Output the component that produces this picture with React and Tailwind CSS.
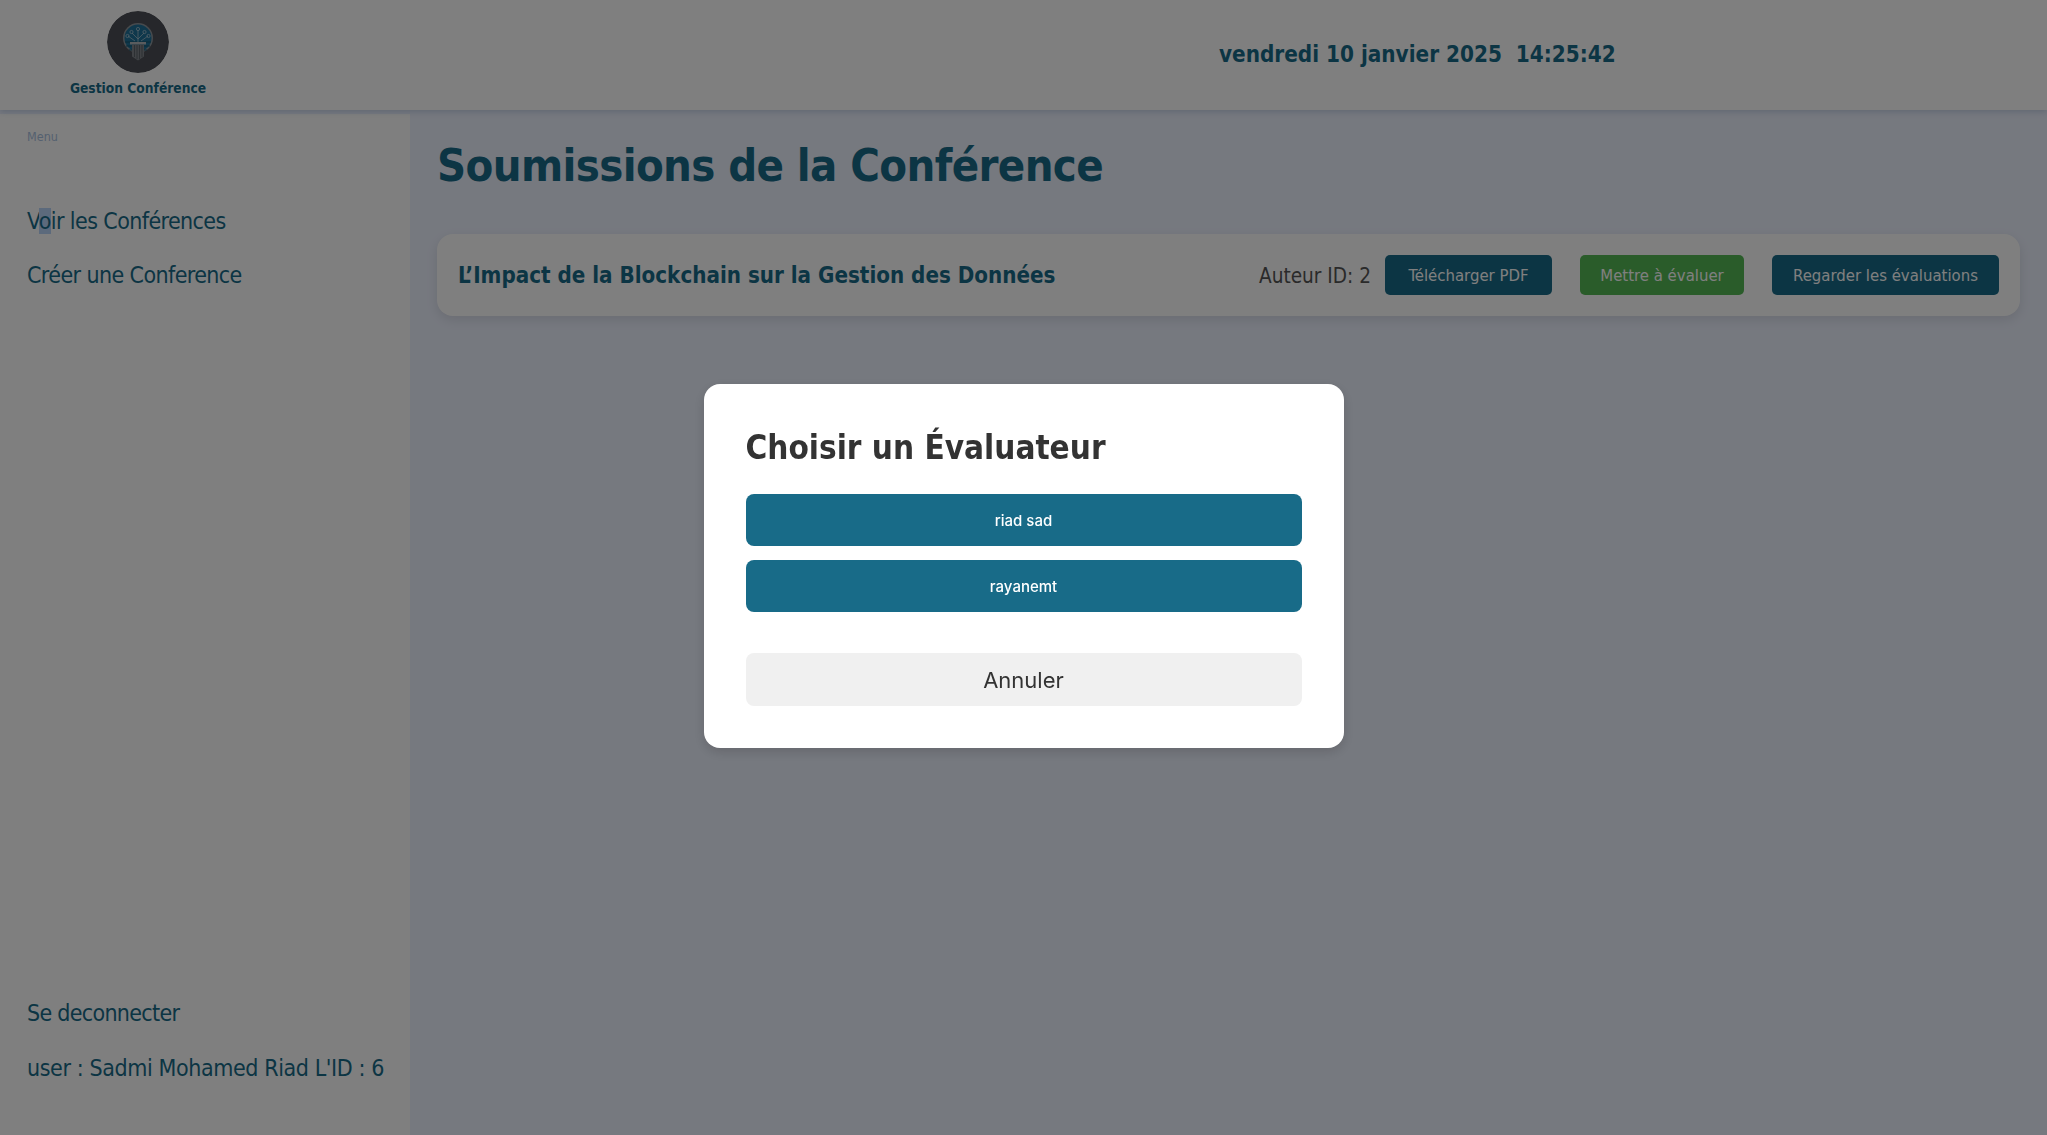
import React from 'react';

const tahoma = 'font-["DejaVu_Sans_Condensed","DejaVu_Sans",sans-serif]';

const Logo = () => (
  <svg width="62" height="62" viewBox="0 0 62 62" className="rounded-full">
    <circle cx="31" cy="31" r="31" fill="#4c4f56" />
    <circle cx="31" cy="27" r="15" fill="#8f959b" />
    <circle cx="31" cy="27" r="13.5" fill="#1f7098" />
    <path d="M18 31h26M19 35h24M22 39h18" stroke="#17566f" strokeWidth="1" />
    <g stroke="#b8ccd6" strokeWidth="0.7" fill="none">
      <path d="M31 31V19M31 28l-6-6M31 28l6-6M28 30l-7-5M34 30l7-5" />
      <circle cx="31" cy="18" r="1.6" />
      <circle cx="24.5" cy="21" r="1.6" />
      <circle cx="37.5" cy="21" r="1.6" />
      <circle cx="20.5" cy="25" r="1.6" />
      <circle cx="41.5" cy="25" r="1.6" />
    </g>
    <rect x="23" y="31" width="16" height="2.5" fill="#b4b8bc" />
    <path d="M25 33.5h12v12l-6 4-6-4z" fill="#80858b" />
    <path d="M27.5 34v12M30 34v14M32.5 34v14M35 34v12" stroke="#52575e" strokeWidth="0.8" />
  </svg>
);

export default function App() {
  return (
    <div className={`h-screen overflow-hidden bg-[#edf2ff] text-[#186b88] ${tahoma}`}>
      <header className="relative h-[110px] bg-white flex shadow-[0_2px_6px_rgba(100,130,170,0.3)]">
        <div className="w-[276px] flex flex-col items-center pt-[11px]">
          <Logo />
          <span className="mt-[6px] text-[13.7px] font-bold leading-[18px]">Gestion Conférence</span>
        </div>
        <div className="ml-[943px] self-center text-[22.3px] font-bold whitespace-pre">vendredi 10 janvier 2025  14:25:42</div>
      </header>

      <div className="flex h-[1021px] mt-1">
        <aside className="w-[410px] bg-white pl-[27px] flex flex-col">
          <div className="mt-[15px] text-[12.5px] leading-4 text-[#a9c1e0]">Menu</div>
          <nav className="mt-[62px] flex flex-col gap-[25px] text-[23px] tracking-[-0.6px] leading-[29px]">
            <span>V<span className="bg-[#b8d4f8]">o</span>ir les Conférences</span>
            <span>Créer une Conference</span>
          </nav>
          <div className="mt-auto mb-[52px] flex flex-col gap-[26px] text-[23px] leading-[29px]">
            <span className="tracking-[-0.7px]">Se deconnecter</span>
            <span className="whitespace-nowrap tracking-[-0.4px]">user : Sadmi Mohamed Riad L'ID : 6</span>
          </div>
        </aside>

        <main className="flex-1 pl-[27px] pr-[27px]">
          <h1 className="mt-[22px] text-[45px] font-bold tracking-[-0.63px] leading-[60px]">Soumissions de la Conférence</h1>
          <div className="mt-[38px] h-[82px] bg-white rounded-2xl shadow-[0_4px_12px_rgba(0,0,0,0.1)] px-[21px] flex items-center">
            <h2 className="pt-0.5 text-[22.2px] font-bold">L’Impact de la Blockchain sur la Gestion des Données</h2>
            <span className="ml-auto pt-0.5 text-[20.6px] text-[#555555]">Auteur ID: 2</span>
            <button className="ml-[14px] h-10 w-[167px] pt-0.5 rounded-[5px] bg-[#186b88] text-white text-[16.6px] font-medium">Télécharger PDF</button>
            <button className="ml-[28px] h-10 w-[164px] pt-0.5 rounded-[5px] bg-[#54b854] text-white text-[16.6px] font-medium">Mettre à évaluer</button>
            <button className="ml-[28px] h-10 w-[227px] pt-0.5 rounded-[5px] bg-[#186b88] text-white text-[16.6px] font-medium">Regarder les évaluations</button>
          </div>
        </main>
      </div>

      {/* modal */}
      <div className="fixed inset-0 bg-black/50 flex items-center justify-center pb-[3px]">
        <div className="w-[640px] h-[364px] bg-white rounded-2xl px-[42px] pt-[42px] shadow-[0_4px_12px_rgba(0,0,0,0.15)]">
          <h2 className="text-[33px] font-bold leading-[44px] text-[#333333]">Choisir un Évaluateur</h2>
          <button className='mt-[24px] w-full h-[52px] pt-0.5 rounded-lg bg-[#186b88] text-white text-[15px] font-medium font-["Inter",sans-serif]'>riad sad</button>
          <button className='mt-[14px] w-full h-[52px] pt-0.5 rounded-lg bg-[#186b88] text-white text-[15px] font-medium font-["Inter",sans-serif]'>rayanemt</button>
          <button className='mt-[41px] w-full h-[53px] pt-0.5 rounded-lg bg-[#f0f0f0] text-[#333333] text-[22px] font-["Inter",sans-serif]'>Annuler</button>
        </div>
      </div>
    </div>
  );
}
